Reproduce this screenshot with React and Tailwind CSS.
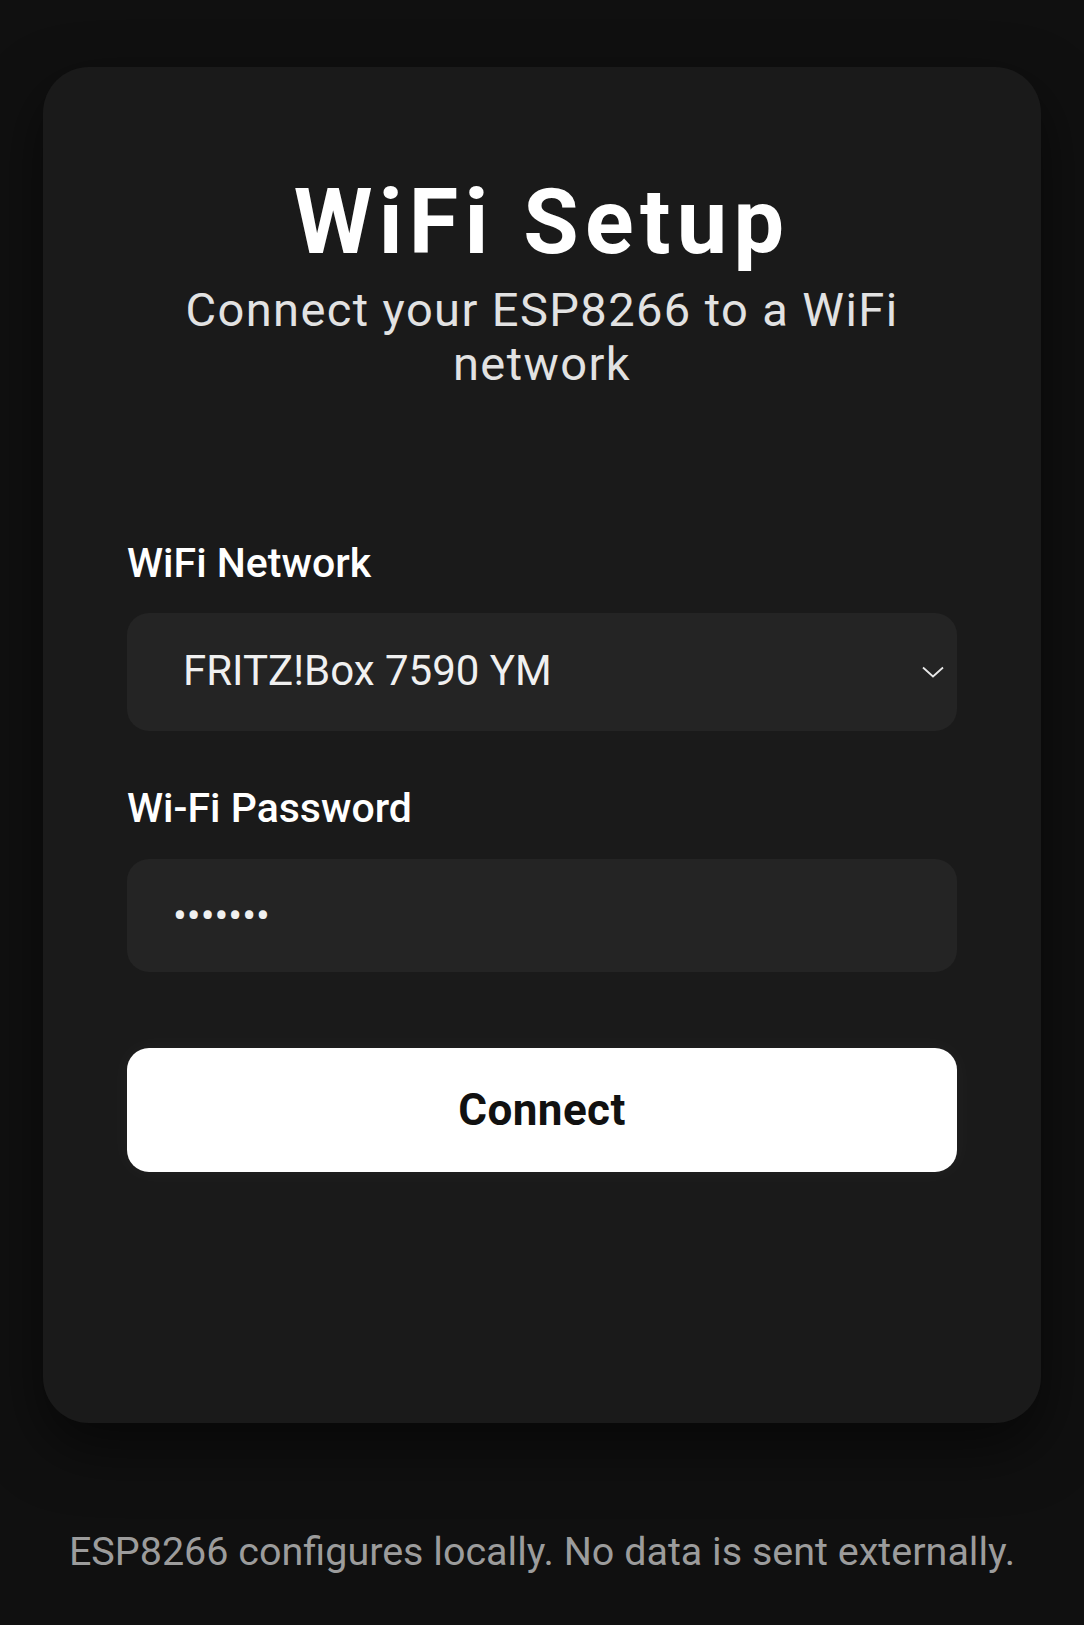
import React, { useState } from "react";

const networks = ["FRITZ!Box 7590 YM", "Vodafone-2.4G", "Guest WiFi"];

const App = () => {
  const [ssid, setSsid] = useState(networks[0]);
  const [password, setPassword] = useState("1234567");

  const handleSubmit = (e) => {
    e.preventDefault();
  };

  return (
    <div
      className="min-h-screen bg-[#101010] px-[43px] pt-[67px] pb-10"
      style={{ fontFamily: "Roboto, 'Noto Sans', sans-serif" }}
    >
      {/* Card */}
      <form
        onSubmit={handleSubmit}
        className="rounded-[46px] bg-[#1a1a1a] px-[84px] pt-[111px] pb-[251px] shadow-[0_24px_60px_rgba(0,0,0,0.55)]"
      >
        {/* Header */}
        <h1 className="text-center text-[90px] leading-[90px] font-bold tracking-[0.07em] text-white">
          WiFi Setup
        </h1>
        <p className="mt-[15px] text-center text-[47px] leading-[54px] tracking-[0.03em] text-[#e2e2e2]">
          Connect your ESP8266 to a WiFi network
        </p>

        {/* Network select */}
        <label className="mt-[148px] block text-[41px] leading-[48px] font-medium text-white">
          WiFi Network
        </label>
        <div className="relative mt-[26px]">
          <select
            value={ssid}
            onChange={(e) => setSsid(e.target.value)}
            className="block h-[118px] w-full appearance-none rounded-[22px] bg-[#242424] pb-[4px] pl-[56px] pr-16 text-[42px] text-[#f0f0f0] outline-none"
          >
            {networks.map((n) => (
              <option key={n} value={n}>
                {n}
              </option>
            ))}
          </select>
          <svg
            className="pointer-events-none absolute right-[13px] top-1/2 -translate-y-1/2"
            width="22"
            height="12"
            viewBox="0 0 22 12"
            fill="none"
          >
            <path d="M1 1.5 L11 10.5 L21 1.5" stroke="#e8e8e8" strokeWidth="1.8" />
          </svg>
        </div>

        {/* Password */}
        <label className="mt-[53px] block text-[41px] leading-[48px] font-medium text-white">
          Wi-Fi Password
        </label>
        <input
          type="password"
          value={password}
          onChange={(e) => setPassword(e.target.value)}
          className="mt-[27px] block h-[113px] w-full rounded-[22px] bg-[#242424] px-[46px] text-[41px] text-[#f0f0f0] outline-none"
        />

        {/* Submit */}
        <button
          type="submit"
          className="mt-[76px] block h-[124px] w-full rounded-[22px] bg-white text-[44px] font-bold tracking-[0.01em] text-[#111] shadow-[0_0_24px_rgba(255,255,255,0.04)]"
        >
          Connect
        </button>
      </form>

      {/* Footer note */}
      <p className="mt-[105px] text-center text-[39.5px] leading-[48px] text-[#9c9c9c]">
        ESP8266 configures locally. No data is sent externally.
      </p>
    </div>
  );
};

export default App;
